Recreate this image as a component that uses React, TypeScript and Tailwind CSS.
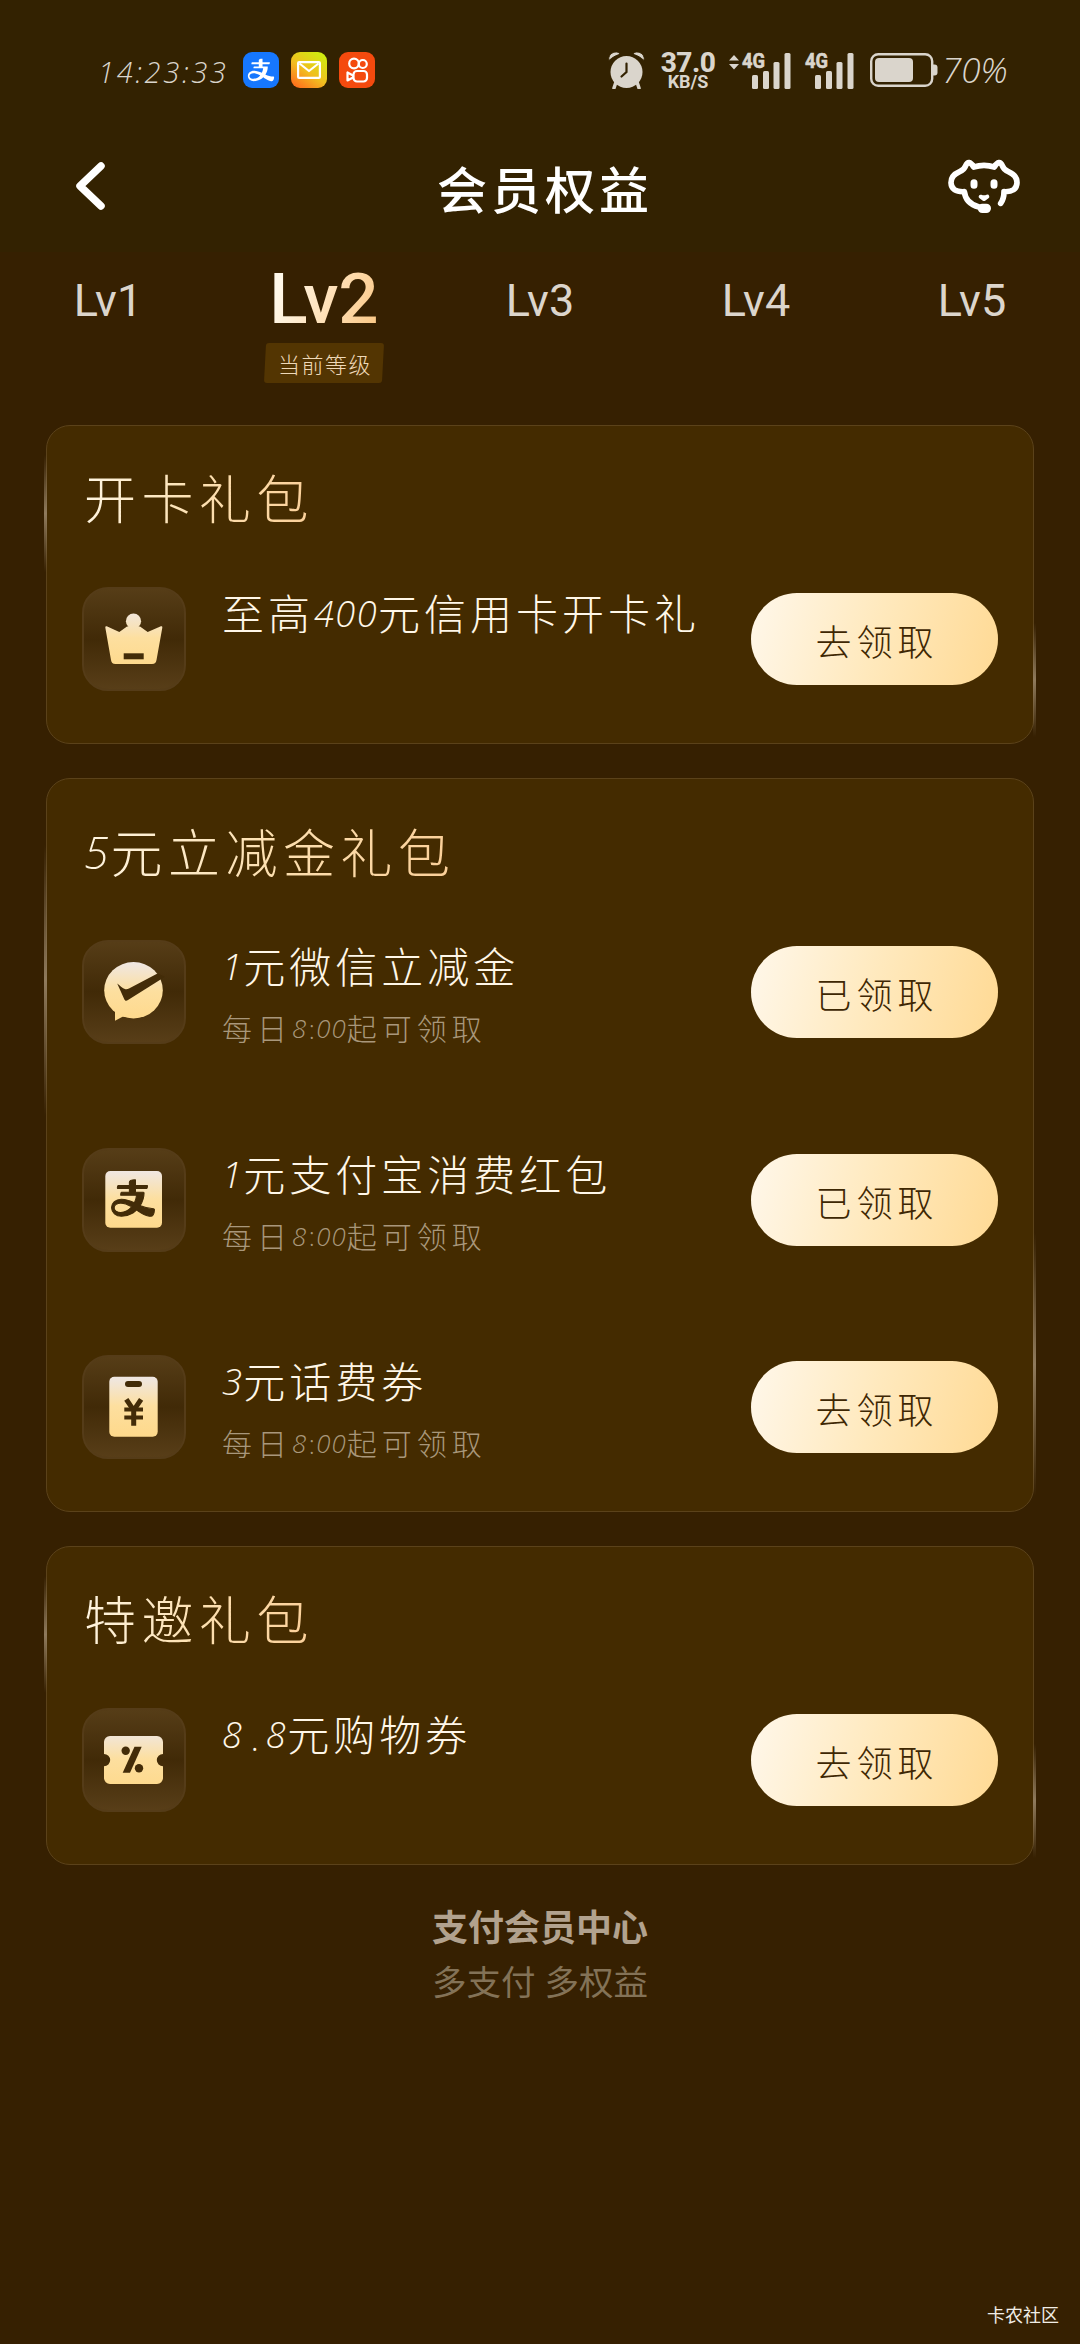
import type { ReactNode } from 'react';
import { AiOutlineAlipay } from 'react-icons/ai';

interface Benefit {
  icon: ReactNode;
  title: string;
  note?: string;
  action: string;
}

interface GiftPack {
  title: string;
  benefits: Benefit[];
}

const INK = '#432c08';

const IconGradient = ({ id }: { id: string }) => (
  <linearGradient id={id} x1="0" y1="22" x2="0" y2="80" gradientUnits="userSpaceOnUse">
    <stop offset="0" stopColor="#efe7e4" />
    <stop offset="0.5" stopColor="#fddf9f" />
    <stop offset="1" stopColor="#fed98c" />
  </linearGradient>
);

const CrownIcon = () => (
  <svg viewBox="0 0 104 104" className="w-full h-full">
    <IconGradient id="crown" />
    <g fill="url(#crown)">
      <path d="M23.3 40.5c0-1.2 1-1.5 2-.9L37.3 45 45 39.5h13L65.7 45l12.6-5.4c1.2-.6 2.2-.2 2 1.2L74.5 73c-.5 2.8-1.5 4-4.5 4H33.5c-3 0-4-1.2-4.5-4z" />
      <circle cx="51.5" cy="34.2" r="7.6" />
    </g>
    <path d="M41.7 66.3h20v6h-20z" fill={INK} />
  </svg>
);

const WechatPayIcon = () => (
  <svg viewBox="0 0 104 104" className="w-full h-full">
    <IconGradient id="wechat" />
    <g fill="url(#wechat)">
      <ellipse cx="51.5" cy="50.3" rx="29.3" ry="28.2" />
      <path d="M33 68v12.7l9-4.7z" />
    </g>
    <path d="M35.2 43.5c2.5 2 5 4.8 8.3 5.7 1 .3 2.2 0 3.500-.6L75.5 33.5 83 36.8 46 60c-1.5 1-2.8 1-3.6-.6z" fill={INK} />
  </svg>
);

const AlipayIcon = () => (
  <svg viewBox="0 0 104 104" className="w-full h-full">
    <IconGradient id="alipay" />
    <rect x="23.3" y="23" width="56.7" height="56.7" rx="5" fill="url(#alipay)" />
    <AiOutlineAlipay x={26.5} y={25.5} size={49} color={INK} strokeWidth={22} />
  </svg>
);

const PhoneCouponIcon = () => (
  <svg viewBox="0 0 104 104" className="w-full h-full">
    <IconGradient id="phone" />
    <rect x="27.3" y="21.7" width="48.4" height="60" rx="5" fill="url(#phone)" />
    <rect x="43" y="26" width="17" height="6" rx="3" fill={INK} />
    <g stroke={INK} strokeWidth="5" fill="none">
      <path d="M44.3 44.3l7.4 11 7.400-11M51.7 54v16.7" />
      <path d="M42.3 54.5H61M42.3 62.5H61" strokeWidth="4" />
    </g>
  </svg>
);

const DiscountIcon = () => (
  <svg viewBox="0 0 104 104" className="w-full h-full">
    <IconGradient id="discount" />
    <path
      d="M28 28h47a6 6 0 0 1 6 6v11.9a6.2 6.2 0 0 0 0 12.4V70a6 6 0 0 1-6 6H28a6 6 0 0 1-6-6V58.3a6.2 6.2 0 0 0 0-12.4V34a6 6 0 0 1 6-6z"
      fill="url(#discount)"
    />
    <g fill={INK}>
      <circle cx="43.7" cy="42.7" r="4.2" />
      <circle cx="57" cy="60.3" r="4.2" />
      <path d="M52.5 38.7h7.2L48 64.7h-7.3z" />
    </g>
  </svg>
);

const levels = ['Lv1', 'Lv2', 'Lv3', 'Lv4', 'Lv5'];
const currentLevel = 'Lv2';

const packs: GiftPack[] = [
  {
    title: '开卡礼包',
    benefits: [{ icon: <CrownIcon />, title: '至高400元信用卡开卡礼', action: '去领取' }],
  },
  {
    title: '5元立减金礼包',
    benefits: [
      { icon: <WechatPayIcon />, title: '1元微信立减金', note: '每日8:00起可领取', action: '已领取' },
      { icon: <AlipayIcon />, title: '1元支付宝消费红包', note: '每日8:00起可领取', action: '已领取' },
      { icon: <PhoneCouponIcon />, title: '3元话费券', note: '每日8:00起可领取', action: '去领取' },
    ],
  },
  {
    title: '特邀礼包',
    benefits: [{ icon: <DiscountIcon />, title: '8.8元购物券', action: '去领取' }],
  },
];

// Digits are set smaller and slanted, next to upright Chinese characters
function MixedText({ text }: { text: string }) {
  return (
    <>
      {text.split(/(\d+|[.:])/).map((part, i) => {
        if (/^\d+$/.test(part)) {
          return (
            <span key={i} className="italic text-[0.86em] tracking-[0.04em] align-[0.08em]">
              {part}
            </span>
          );
        }
        if (part === '.' || part === ':') {
          return (
            <span key={i} className={`text-[0.84em] tracking-normal ${part === '.' ? 'px-[0.2em]' : 'px-[0.06em] align-[0.06em]'}`}>
              {part}
            </span>
          );
        }
        return part;
      })}
    </>
  );
}

function Signal({ arrows }: { arrows?: boolean }) {
  return (
    <svg viewBox="0 -8 62 54" className="w-[62px] h-[54px]" fill="#dad5cc">
      {arrows && <path d="M0 9.5L5 4l5 5.500zM0 13h10l-5 5.500z" />}
      <text
        x="13"
        y="17"
        fontFamily="Roboto, sans-serif"
        fontWeight="700"
        fontSize="21"
        textLength="23"
        lengthAdjust="spacingAndGlyphs"
        stroke="#dad5cc"
        strokeWidth="0.6"
      >
        4G
      </text>
      <rect x="23" y="24" width="6" height="14" rx="1.5" />
      <rect x="34" y="20" width="6" height="18" rx="1.5" />
      <rect x="44.5" y="11" width="6" height="27" rx="1.5" />
      <rect x="55.5" y="2" width="6" height="36" rx="1.5" />
    </svg>
  );
}

function StatusBar() {
  return (
    <div className="h-[140px] flex items-center pl-[98px] pr-[70px] text-[#dad5cc]">
      <span className="w-[145px] pt-1 text-[29px] font-light italic tracking-[2.7px] whitespace-nowrap">14:23:33</span>
      <div className="flex gap-3">
        <div className="w-9 h-9 rounded-[9px] bg-[#1677fe] flex items-center justify-center">
          <AiOutlineAlipay className="w-[30px] h-[30px] text-white" />
        </div>
        <div className="w-9 h-9 rounded-[9px] bg-[linear-gradient(35deg,#ff6a1c_5%,#f2bd20_45%,#c8f50c_100%)] flex items-center justify-center">
          <svg viewBox="0 0 24 18" className="w-6 h-[18px]" fill="none" stroke="#fff" strokeWidth="2.2" strokeLinejoin="round">
            <rect x="1.1" y="1.1" width="21.8" height="15.8" rx="1" />
            <path d="M2.5 2.5L12 10l9.500-7.500" />
          </svg>
        </div>
        <div className="w-9 h-9 rounded-[9px] bg-[#f44a0e] flex items-center justify-center">
          <svg viewBox="0 0 36 36" className="w-9 h-9" fill="none" stroke="#fff" strokeWidth="2.2" strokeLinejoin="round">
            <circle cx="15" cy="11.5" r="4.8" />
            <circle cx="23.8" cy="12" r="4" />
            <rect x="14.5" y="19" width="13.5" height="10.5" rx="3.5" />
            <path d="M14 23.5l-5.500-3v8l5.500-3z" />
          </svg>
        </div>
      </div>

      <div className="ml-auto flex items-center">
        <svg viewBox="0 0 37 38" className="w-[37px] h-[38px] mr-4" fill="#dad5cc">
          <circle cx="18.5" cy="21" r="16" />
          <path d="M8 31l-2 6M29 31l2 6" stroke="#dad5cc" strokeWidth="3.5" strokeLinecap="round" />
          <path d="M1 9.5C-.5 5 4 .5 8.500 1c2 .2 3 1 3.500 2.300C7.500 4.500 4 6.800 1 9.500zM36 9.500C37.500 5 33 .5 28.500 1c-2 .2-3 1-3.500 2.300 4.500 1.200 8 3.500 11 6.200z" stroke="#332201" strokeWidth="1" />
          <path d="M18.5 12.5V21l-5 4.500" stroke="#332201" strokeWidth="2.2" fill="none" strokeLinecap="round" />
        </svg>
        <div className="w-[54px] mr-[14px] flex flex-col items-center font-[Roboto,sans-serif] font-bold whitespace-nowrap">
          <span className="text-[28px] leading-[23px] font-extrabold tracking-[-0.5px]">37.0</span>
          <span className="text-[18px] leading-[16px]">KB/S</span>
        </div>
        <Signal arrows />
        <span className="w-[1px]" />
        <Signal />
        <svg viewBox="0 0 68 34" className="w-[68px] h-[34px] ml-4" fill="#dad5cc">
          <rect x="1.2" y="1.2" width="61" height="31.6" rx="7" fill="none" stroke="#dad5cc" strokeWidth="2.4" />
          <rect x="5" y="5" width="38" height="24" rx="4" />
          <path d="M63 11.5h1.500a3 3 0 0 1 3 3v5a3 3 0 0 1-3 3H63z" />
        </svg>
        <span className="ml-1 w-[68px] text-[35px] leading-[40px] font-light italic whitespace-nowrap">70%</span>
      </div>
    </div>
  );
}

function NavBar() {
  return (
    <div className="h-[100px] flex items-center justify-between pl-[74px] pr-[60px]">
      <svg viewBox="0 0 32 50" className="w-8 h-[50px] -mt-2" fill="none" stroke="#fff" strokeWidth="7.5" strokeLinecap="round" strokeLinejoin="round">
        <path d="M27 5L6 25l21 20" />
      </svg>
      <h1 className="text-[50px] leading-[60px] font-medium tracking-[4px] text-white pl-[36px]">会员权益</h1>
      <svg viewBox="84 54 216 168" className="w-[72px] h-[56px] -mt-2" fill="none" stroke="#fff" strokeWidth="17" strokeLinecap="round" strokeLinejoin="round">
        <path d="M242 190q10-14 10-35 38 2 39-27 0-22-26-33-13-5-18-18-9-20-24 4-31-10-62 0-15-24-24-4-5 13-18 18-26 11-26 33 1 29 40 27 4 36 44 46" />
        <rect x="176" y="194" width="34" height="22" rx="11" fill="#fff" strokeWidth="6" />
        <path d="M162 128v8M222 128v8" strokeWidth="21" />
        <path d="M182 170q10 4 20 0l-10 7z" fill="#fff" strokeWidth="12" />
      </svg>
    </div>
  );
}

function LevelTabs() {
  return (
    <div className="h-[173px] pt-[5px] flex font-[Roboto,sans-serif]">
      {levels.map((level) =>
        level === currentLevel ? (
          <div key={level} className="flex-1 flex flex-col items-center">
            <span className="h-[86px] leading-[84px] text-[71px] font-medium text-transparent bg-clip-text bg-[linear-gradient(110deg,#fff8ea_15%,#ffe3bd_50%,#fbca8b_90%)]">
              {level}
            </span>
            <div className="w-[118px] h-10 rounded-[3px] -skew-x-3 bg-[#533502] flex items-center justify-center">
              <span className="pl-[2px] skew-x-3 font-['Noto_Sans_CJK_SC',sans-serif] font-light text-[22px] leading-[30px] tracking-[1.5px] text-[#efd9b8]">
                当前等级
              </span>
            </div>
          </div>
        ) : (
          <div key={level} className="flex-1 text-center leading-[87px] text-[45px] text-[#dcd5cc]">
            {level}
          </div>
        ),
      )}
    </div>
  );
}

function BenefitRow({ benefit }: { benefit: Benefit }) {
  return (
    <div className="h-[104px] flex items-start">
      <div className="w-[104px] h-[104px] shrink-0 rounded-[26px] border-2 border-[#553c18] bg-[linear-gradient(180deg,#563d17_0%,#412a07_50%,#583e18_100%)]">
        <div className="-m-[2px] w-[104px] h-[104px]">{benefit.icon}</div>
      </div>
      <div className="ml-[36px] flex-1 whitespace-nowrap">
        <div className="h-[54px] leading-[52px] text-[42px] font-light tracking-[4px] text-[#fff7e8]">
          <MixedText text={benefit.title} />
        </div>
        {benefit.note && (
          <div className="mt-[14px] leading-[40px] text-[30px] font-light tracking-[5px] text-[#a8977b]">
            <MixedText text={benefit.note} />
          </div>
        )}
      </div>
      <button className="mt-[6px] w-[247px] h-[92px] shrink-0 rounded-full bg-[linear-gradient(105deg,#fff6e6_5%,#ffe9bd_50%,#ffdb98_95%)] pt-[8px] pl-[5px] text-[36px] font-light tracking-[5px] text-[#3e2703]">
        {benefit.action}
      </button>
    </div>
  );
}

function PackCard({ pack }: { pack: GiftPack }) {
  return (
    <section className="relative rounded-[24px] border border-[#5b421a] bg-[#442b00] px-[35px] pb-[52px]">
      {/* Light streaks on both edges */}
      <div className="absolute -left-[3px] top-[9%] h-[37%] w-[3px] bg-[linear-gradient(180deg,transparent,#8f7a5c_50%,transparent)]" />
      <div className="absolute -right-[3px] top-[62%] h-[36%] w-[3px] bg-[linear-gradient(180deg,transparent,#8f7a5c_50%,transparent)]" />

      <div className="h-[161px] pt-[36px]">
        <h2 className="w-fit ml-[2px] leading-[74px] text-[52px] font-light tracking-[5.5px] text-transparent bg-clip-text bg-[linear-gradient(100deg,#fff6e3,#fde0b0_50%,#fbcf98)]">
          <MixedText text={pack.title} />
        </h2>
      </div>
      <div className="flex flex-col gap-[103.5px]">
        {pack.benefits.map((benefit) => (
          <BenefitRow key={benefit.title} benefit={benefit} />
        ))}
      </div>
    </section>
  );
}

export default function App() {
  return (
    <div className="w-[1080px] h-[2344px] overflow-hidden flex flex-col bg-[#362001] font-['Open_Sans','Noto_Sans_CJK_SC',sans-serif]">
      <header className="h-[252px] bg-[#332201]">
        <StatusBar />
        <NavBar />
      </header>
      <LevelTabs />

      <main className="mx-[46px] flex flex-col gap-[34px]">
        {packs.map((pack) => (
          <PackCard key={pack.title} pack={pack} />
        ))}
      </main>

      <div className="mt-[36px] flex flex-col items-center">
        <p className="leading-[54px] text-[36px] font-bold text-[#b2a28e]">支付会员中心</p>
        <p className="leading-[54px] text-[34.5px] text-[#837257]">多支付 多权益</p>
      </div>

      <p className="mt-auto mb-[16px] mr-[21px] self-end leading-[26px] text-[18px] text-[#f1ede6]">卡农社区</p>
    </div>
  );
}
